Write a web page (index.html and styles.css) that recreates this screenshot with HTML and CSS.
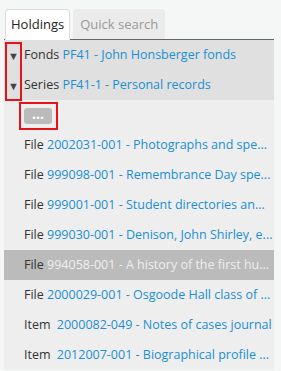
FILE: index.html
```html
<!DOCTYPE html>
<html lang="en">
<head>
    <meta charset="UTF-8">
    <title>Holdings</title>
    <link rel="stylesheet" href="styles.css">
</head>
<body>

    <div class="sidebar">
        <ul class="tabs">
            <li class="tab active">Holdings</li>
            <li class="tab">Quick search</li>
        </ul>

        <div class="tree">
            <div class="node parent">
                <span class="arrow">&#9660;</span>
                <span class="level">Fonds</span> <a href="#">PF41 - John Honsberger fonds</a>
            </div>
            <div class="node parent">
                <span class="arrow">&#9660;</span>
                <span class="level">Series</span> <a href="#">PF41-1 - Personal records</a>
            </div>

            <div class="node more">
                <button class="more-btn">...</button>
            </div>

            <div class="node"><span class="level">File</span> <a href="#">2002031-001 - Photographs and spe...</a></div>
            <div class="node"><span class="level">File</span> <a href="#">999098-001 - Remembrance Day spe...</a></div>
            <div class="node"><span class="level">File</span> <a href="#">999001-001 - Student directories an...</a></div>
            <div class="node"><span class="level">File</span> <a href="#">999030-001 - Denison, John Shirley, e...</a></div>
            <div class="node current"><span class="level">File</span> <a href="#">994058-001 - A history of the first hu...</a></div>
            <div class="node"><span class="level">File</span> <a href="#">2000029-001 - Osgoode Hall class of ...</a></div>
            <div class="node"><span class="level item">Item</span> <a href="#">2000082-049 - Notes of cases journal</a></div>
            <div class="node"><span class="level item">Item</span> <a href="#">2012007-001 - Biographical profile ...</a></div>

            <!-- callout boxes -->
            <div class="mark mark-arrows"></div>
            <div class="mark mark-more"></div>
        </div>
    </div>

</body>
</html>
```

FILE: styles.css
```css
body {
    font-family: "Open Sans", Arial, sans-serif;
    background-color: #f5f7f7;
    margin: 0;
}

.sidebar {
    width: 270px;
    padding-left: 4px;
}

.tabs {
    list-style: none;
    margin: 0;
    padding: 9px 0 0 1px;
    display: flex;
    gap: 3px;
    border-bottom: 1px solid #666;
}

.tab {
    height: 30px;
    line-height: 30px;
    padding: 0 7px;
    font-size: 13px;
    color: #999;
    background-color: #ebebeb;
    border-radius: 4px 4px 0 0;
    box-sizing: border-box;
    white-space: nowrap;
}

.tab.active {
    color: #222;
    background-color: white;
    border: 1px solid #ddd;
    border-bottom: none;
    height: 31px;
    line-height: 29px;
    margin-bottom: -1px;
    padding: 0 5px;
}

.tree {
    position: relative;
    background-color: #eee;
}

.node {
    height: 30px;
    line-height: 30px;
    padding-left: 20px;
    font-size: 12.5px;
    color: #333;
    white-space: nowrap;
    overflow: hidden;
    position: relative;
}

.node a {
    color: #1a8fd3;
    text-decoration: none;
}

.node .item {
    margin-right: 3px;
}

.node.parent {
    background-color: #e0e0e0;
}

.node .arrow {
    position: absolute;
    left: 4px;
    top: 1px;
    font-size: 11px;
    color: #444;
}

.node.current {
    background-color: #bbb;
}

.node.current a {
    color: #eee;
}

.more-btn {
    font-family: inherit;
    width: 28px;
    height: 16px;
    padding: 0 0 4px;
    border: none;
    border-radius: 3px;
    background-color: #bbb;
    color: white;
    font-size: 14px;
    font-weight: bold;
    line-height: 10px;
    vertical-align: middle;
    cursor: pointer;
}

.mark {
    position: absolute;
    border: 2px solid #e5141b;
    box-sizing: border-box;
}

.mark-arrows {
    left: 1px;
    top: 2px;
    width: 17px;
    height: 59px;
}

.mark-more {
    left: 15px;
    top: 62px;
    width: 39px;
    height: 28px;
}
```
